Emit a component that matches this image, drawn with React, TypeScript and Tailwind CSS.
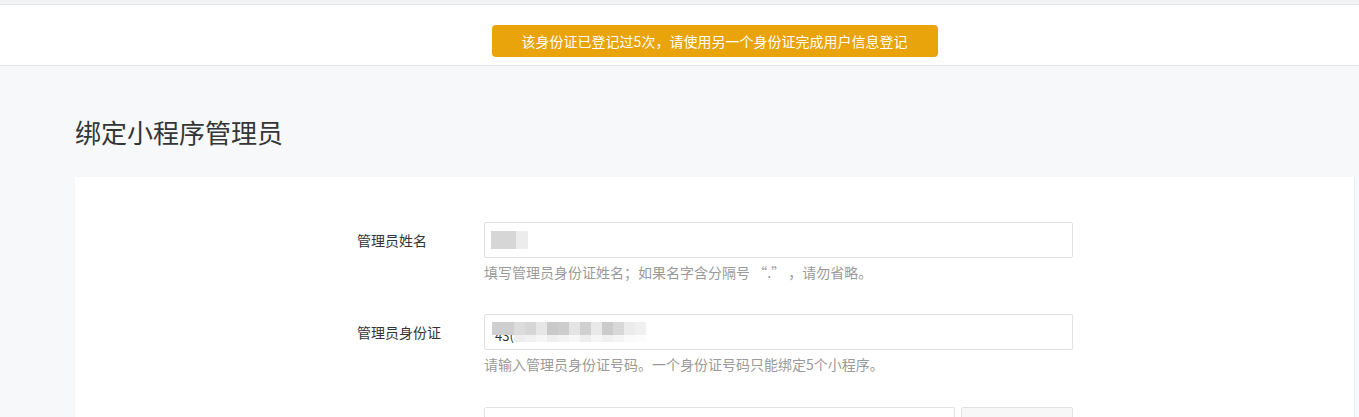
import React from "react";

const font = { fontFamily: '"Microsoft YaHei", "Noto Sans CJK SC", "Noto Sans", sans-serif' };

const idTop = ["#cfcfcf", "#cfcfcf", "#dcdcdc", "#d6d6d6", "#e6e6e6", "#c9c9c9", "#cdcdcd", "#e4e4e4", "#d0d0d0", "#e9e9e9", "#cbcbcb", "#d8d8d8", "#ececec", "#f0f0f0"];
const idBot = ["#ffffff", "#ffffff", "#ededed", "#f1f1f1", "#f6f6f6", "#efefef", "#f3f3f3", "#f7f7f7", "#eeeeee", "#f5f5f5", "#f0f0f0", "#f4f4f4", "#fafafa", "#fcfcfc"];

export default function App() {
  return (
    <div className="w-[1359px] h-[417px] overflow-hidden bg-[#f7f8fa]" style={font}>
      <div className="h-[5px] bg-[#f3f4f6] border-b border-[#e6e7ea]" />
      <div className="h-[61px] bg-white border-b border-[#e3e4e8] flex justify-center pt-[20px] pl-[70px]">
        <div className="w-[446px] h-[32px] rounded-[4px] bg-[#e9a30b] text-white text-[14px] flex items-center justify-center">
          该身份证已登记过5次，请使用另一个身份证完成用户信息登记
        </div>
      </div>
      <div className="pl-[75px] pr-[4px]">
        <h1 className="pt-[47px] h-[111px] text-[26px] leading-[38px] text-[#353535] font-normal">绑定小程序管理员</h1>
        <div className="bg-white h-[300px] pt-[45px] pl-[282px] border-r border-[#eeeeee]">
          <div className="flex">
            <div className="w-[127px] text-[14px] text-[#353535] leading-[36px]">管理员姓名</div>
            <div>
              <div className="w-[589px] h-[36px] border border-[#e2e2e2] rounded-[2px] flex items-center pl-[6px]">
                <div className="flex">
                  <div className="w-[25px] h-[18px] bg-[#d6d6d6]" />
                  <div className="w-[12px] h-[18px] bg-[#ececec]" />
                </div>
              </div>
              <div className="text-[14px] text-[#9a9a9a] leading-[20px] mt-[4px]">填写管理员身份证姓名；如果名字含分隔号 “.” ，请勿省略。</div>
            </div>
          </div>
          <div className="flex mt-[32px]">
            <div className="w-[127px] text-[14px] text-[#353535] leading-[36px]">管理员身份证</div>
            <div>
              <div className="relative w-[589px] h-[36px] border border-[#e2e2e2] rounded-[2px] flex items-center pl-[7px]">
                <span className="absolute left-[10px] top-[12px] text-[13px] text-[#353535] leading-[18px]">43(</span>
                <div className="relative flex flex-col">
                  <div className="flex">
                    {idTop.map((c, i) => (
                      <div key={i} className="w-[11px] h-[13px]" style={{ background: c }} />
                    ))}
                  </div>
                  <div className="flex">
                    {idBot.map((c, i) => (
                      <div key={i} className="w-[11px] h-[7px]" style={{ background: i < 2 ? "transparent" : c }} />
                    ))}
                  </div>
                </div>
              </div>
              <div className="text-[14px] text-[#9a9a9a] leading-[20px] mt-[4px]">请输入管理员身份证号码。一个身份证号码只能绑定5个小程序。</div>
            </div>
          </div>
          <div className="flex mt-[33px]">
            <div className="w-[127px]" />
            <div className="flex gap-[6px]">
              <div className="w-[471px] h-[36px] border border-[#e2e2e2] rounded-[2px]" />
              <div className="w-[112px] h-[36px] border border-[#e2e2e2] rounded-[2px] bg-[#f7f7f7]" />
            </div>
          </div>
        </div>
      </div>
    </div>
  );
}
